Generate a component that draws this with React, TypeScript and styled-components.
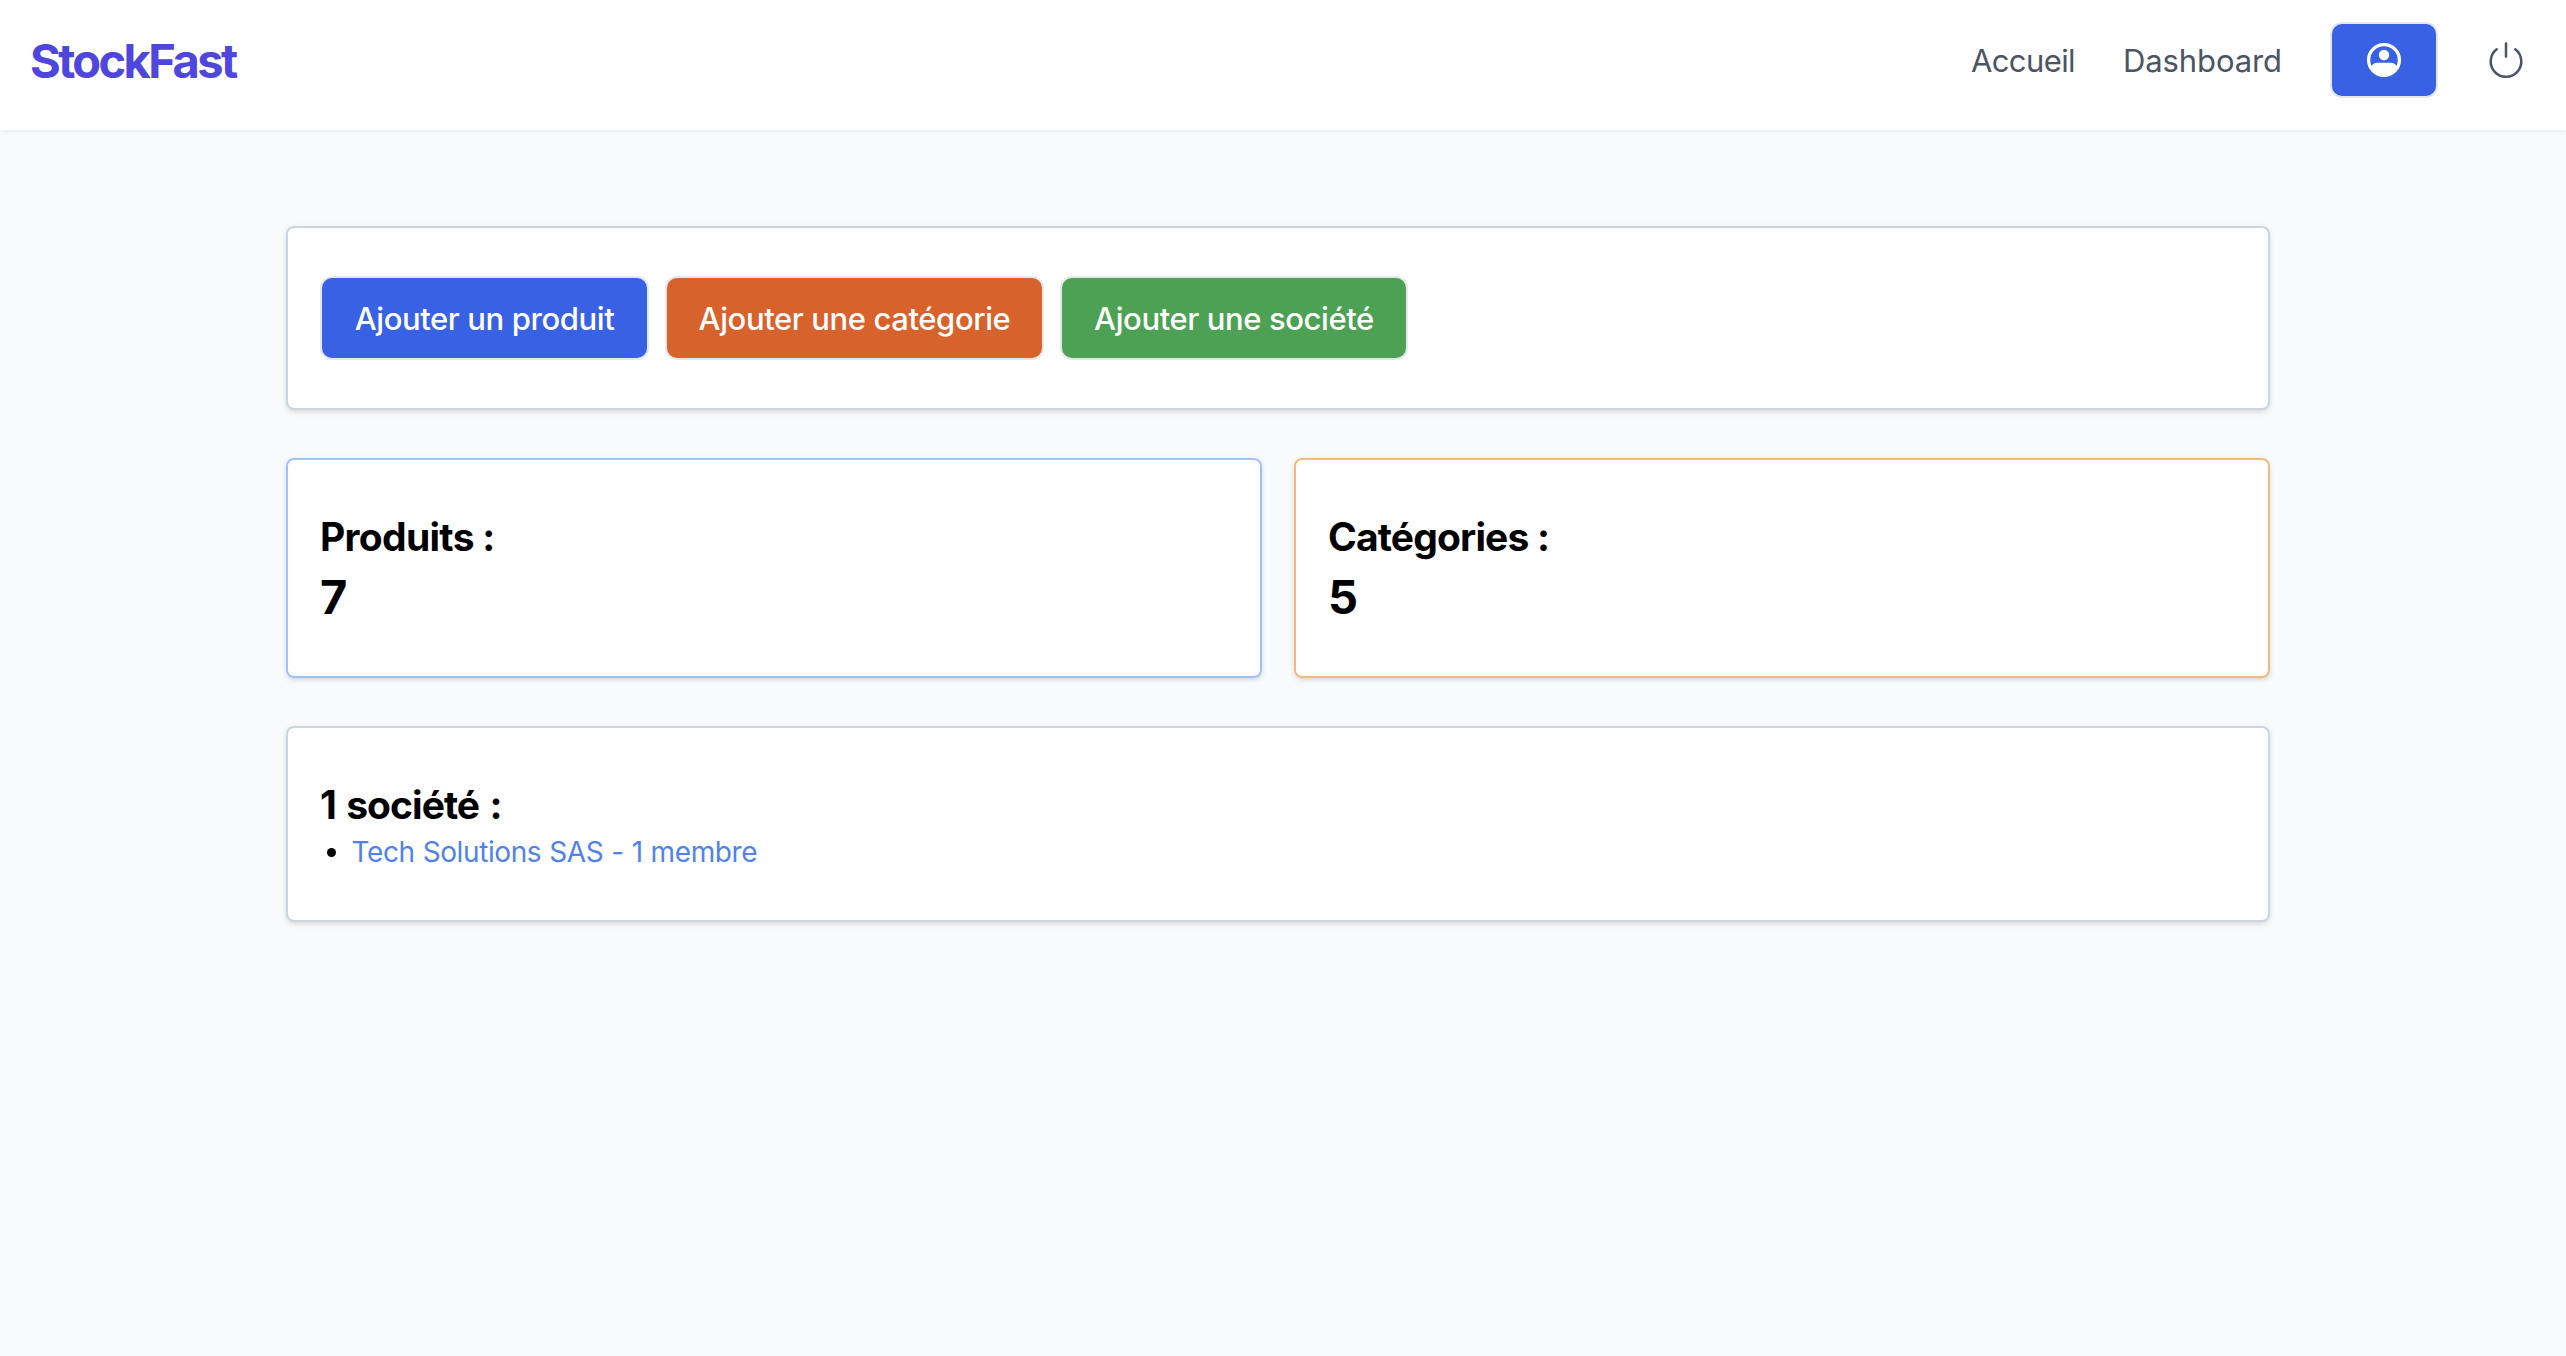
import React from 'react';
import styled, { createGlobalStyle } from 'styled-components';

const GlobalStyle = createGlobalStyle`
  * { box-sizing: border-box; }
  body {
    margin: 0;
    background: #f9fafc;
    color: #000;
    font-family: Inter, "Liberation Sans", sans-serif;
  }
  h1, h2, p, ul { margin: 0; padding: 0; }
  a { text-decoration: none; }
`;

const Page = styled.div`
  min-height: 1356px;
`;

const Header = styled.header`
  display: flex;
  align-items: center;
  justify-content: space-between;
  height: 130px;
  padding: 0 40px 10px 30px;
  background: #fff;
  box-shadow: 0 2px 4px rgba(0, 0, 0, 0.06);
`;

const Logo = styled.a`
  padding-top: 1px;
  color: #4f46dd;
  font-size: 47px;
  font-weight: 700;
  line-height: 56px;
  letter-spacing: -2.6px;
`;

const Nav = styled.nav`
  display: flex;
  align-items: center;
  gap: 48px;
`;

const NavLinks = styled.div`
  display: flex;
  gap: 48px;
`;

const NavLink = styled.a<{ $tracking: number }>`
  padding-top: 1px;
  color: #4b5563;
  font-size: 31px;
  line-height: 32px;
  letter-spacing: ${({ $tracking }) => $tracking}px;
`;

const AccountButton = styled.button`
  display: flex;
  align-items: center;
  justify-content: center;
  width: 108px;
  height: 76px;
  padding: 0;
  border: 2px solid #e5e7eb;
  border-radius: 12px;
  background: #3862e3;
  color: #fff;
`;

const PowerButton = styled.button`
  display: flex;
  padding: 0;
  border: 0;
  background: none;
  color: #4b5563;
`;

const Main = styled.main`
  display: grid;
  grid-template-columns: 1fr 1fr;
  gap: 48px 32px;
  width: 1984px;
  margin: 96px 0 0 286px;
`;

const Card = styled.section<{ $border?: string; $wide?: boolean }>`
  grid-column: ${({ $wide }) => ($wide ? '1 / -1' : 'auto')};
  padding: 48px 32px;
  border: 2px solid ${({ $border = '#cbd5e1' }) => $border};
  border-radius: 8px;
  background: #fff;
  box-shadow: 0 2px 6px rgba(0, 0, 0, 0.1), 0 2px 4px -2px rgba(0, 0, 0, 0.1);
`;

const Actions = styled.div`
  display: flex;
  gap: 16px;
`;

const ActionButton = styled.button<{ $color: string; $width: number }>`
  width: ${({ $width }) => $width}px;
  height: 84px;
  padding: 0;
  border: 2px solid #e5e7eb;
  border-radius: 12px;
  background: ${({ $color }) => $color};
  color: #fff;
  font-family: inherit;
  font-size: 31px;
  font-weight: 500;
  line-height: 81px;
  letter-spacing: -0.4px;
  white-space: nowrap;
`;

const Title = styled.h2<{ $tracking: number; $wordGap?: number }>`
  font-size: 39px;
  font-weight: 700;
  line-height: 57px;
  letter-spacing: ${({ $tracking }) => $tracking}px;
  word-spacing: ${({ $wordGap = 0 }) => $wordGap}px;
`;

const Count = styled.p`
  font-size: 47px;
  font-weight: 700;
  line-height: 63px;
`;

const CompanyList = styled.ul`
  list-style: none;
`;

const Company = styled.li`
  display: flex;
  align-items: center;
  height: 38px;
  margin-bottom: 1px;
  padding-left: 7px;

  &::before {
    content: "";
    width: 9px;
    height: 9px;
    margin-right: 15.5px;
    border-radius: 50%;
    background: #000;
  }
`;

const CompanyLink = styled.a`
  color: #5082ef;
  font-size: 28px;
  line-height: 38px;
  letter-spacing: -0.4px;
  word-spacing: 0.5px;
`;

const AccountIcon = () => (
  <svg width="40" height="40" viewBox="0 0 40 40" fill="currentColor">
    <circle cx="20" cy="20" r="15.4" fill="none" stroke="currentColor" strokeWidth="3.3" />
    <circle cx="20" cy="15" r="5.2" />
    <path d="M6.5 27.2C8.4 24.2 10.4 22.8 13.6 22.8H26.4C29.6 22.8 31.6 24.2 33.5 27.2A15.4 15.4 0 0 1 6.5 27.2Z" />
  </svg>
);

const PowerIcon = () => (
  <svg
    width="40"
    height="40"
    viewBox="0 0 40 40"
    fill="none"
    stroke="currentColor"
    strokeWidth="2.5"
    strokeLinecap="round"
    strokeLinejoin="round"
  >
    <path d="M29.3 9.3A15.3 15.3 0 1 1 10.7 9.3" />
    <path d="M20 3.4V16.4" />
  </svg>
);

export default function App() {
  return (
    <Page>
      <GlobalStyle />
      <Header>
        <Logo>StockFast</Logo>
        <Nav>
          <NavLinks>
            <NavLink $tracking={-0.6}>Accueil</NavLink>
            <NavLink $tracking={-0.1}>Dashboard</NavLink>
          </NavLinks>
          <AccountButton aria-label="Profil">
            <AccountIcon />
          </AccountButton>
          <PowerButton aria-label="Déconnexion">
            <PowerIcon />
          </PowerButton>
        </Nav>
      </Header>
      <Main>
        <Card $wide>
          <Actions>
            <ActionButton $color="#3862e3" $width={329}>Ajouter un produit</ActionButton>
            <ActionButton $color="#d8622b" $width={379}>Ajouter une catégorie</ActionButton>
            <ActionButton $color="#4da154" $width={348}>Ajouter une société</ActionButton>
          </Actions>
        </Card>
        <Card $border="#9ec3fa">
          <Title $tracking={-0.7}>Produits :</Title>
          <Count>7</Count>
        </Card>
        <Card $border="#f2ba7d">
          <Title $tracking={-0.85}>Catégories :</Title>
          <Count>5</Count>
        </Card>
        <Card $wide>
          <Title $tracking={-0.95} $wordGap={2}>1 société :</Title>
          <CompanyList>
            <Company>
              <CompanyLink>Tech Solutions SAS - 1 membre</CompanyLink>
            </Company>
          </CompanyList>
        </Card>
      </Main>
    </Page>
  );
}
